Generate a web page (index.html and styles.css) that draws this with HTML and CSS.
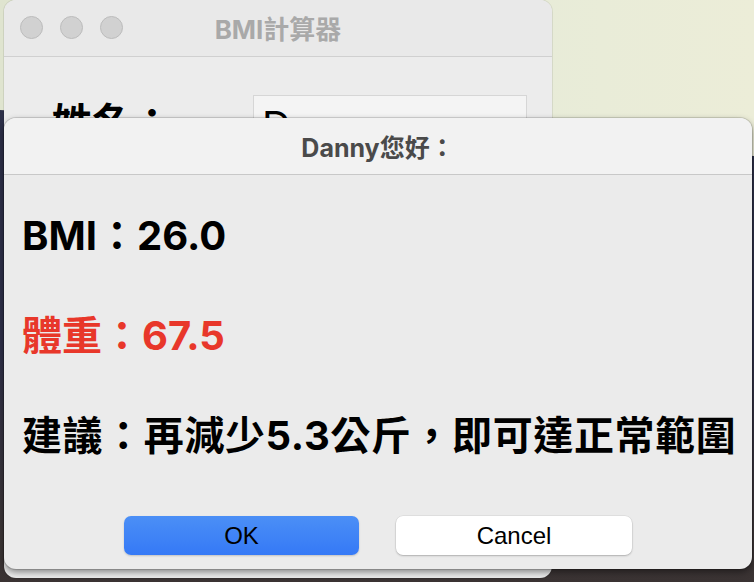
FILE: index.html
```html
<!DOCTYPE html>
<html lang="zh-Hant">
<head>
<meta charset="utf-8">
<title>BMI計算器</title>
<link rel="stylesheet" href="styles.css">
</head>
<body>
<div class="desktop">
  <div class="window back">
    <div class="titlebar">
      <div class="lights">
        <span class="light"></span>
        <span class="light"></span>
        <span class="light"></span>
      </div>
      <div class="wtitle">BMI計算器</div>
    </div>
    <div class="wbody">
      <div class="field-row">
        <span class="label">姓名：</span>
        <div class="textfield">D</div>
      </div>
    </div>
  </div>

  <div class="window dialog">
    <div class="dtitlebar">Danny您好：</div>
    <div class="dbody">
      <div class="lines">
        <div class="line">BMI：26.0</div>
        <div class="line red">體重：67.5</div>
        <div class="line wide">建議：再減少5.3公斤，即可達正常範圍</div>
      </div>
      <div class="buttons">
        <button class="btn primary">OK</button>
        <button class="btn">Cancel</button>
      </div>
    </div>
  </div>
</div>
</body>
</html>
```

FILE: styles.css
```css
* { box-sizing: border-box; }
html, body {
  margin: 0;
  padding: 0;
  width: 754px;
  height: 582px;
  overflow: hidden;
}
body {
  font-family: Inter, "Noto Sans CJK TC", sans-serif;
  text-spacing-trim: space-all;
}
.desktop {
  position: relative;
  width: 754px;
  height: 582px;
  background: linear-gradient(90deg, #dfe4cf 0%, #e6ebd8 60%, #ecedd8 100%);
  overflow: hidden;
}
.desktop::before {
  content: "";
  position: absolute;
  inset: 0;
  background: linear-gradient(180deg, #2c3048 0%, #2f3049 60%, #3d3637 92%, #3a3333 100%);
  clip-path: polygon(0 110px, 100% 156px, 100% 100%, 0 100%);
}
.window {
  position: absolute;
  border-radius: 12px;
  overflow: hidden;
}
.back {
  left: 4px;
  top: 0;
  width: 548px;
  height: 578px;
  background: #ececec;
  box-shadow: 0 0 0 1px rgba(0,0,0,0.08);
}
.titlebar {
  position: relative;
  height: 57px;
  background: #e9e9e9;
  border-bottom: 1px solid #d0d0d0;
  display: flex;
  align-items: center;
  justify-content: center;
}
.lights {
  position: absolute;
  left: 16px;
  top: 16px;
  display: flex;
  gap: 17px;
}
.light {
  width: 23px;
  height: 23px;
  border-radius: 50%;
  background: #d1d1d1;
  border: 1px solid #bcbcbc;
}
.wtitle {
  font-weight: bold;
  font-size: 26px;
  color: #a9a9a9;
  margin-top: -2px;
}
.wbody {
  padding: 38px 0 0 48px;
}
.field-row {
  display: flex;
  align-items: flex-start;
}
.label {
  font-weight: bold;
  font-size: 40px;
  color: #000;
  width: 201px;
  margin-top: 4px;
  line-height: 48px;
}
.textfield {
  width: 274px;
  height: 60px;
  background: #f4f4f4;
  border: 1px solid #d6d6d6;
  font-size: 40px;
  padding-left: 8px;
  padding-top: 6px;
  line-height: 48px;
  color: #000;
}

.dialog {
  left: 4px;
  top: 118px;
  width: 748px;
  height: 451px;
  background: #ebebeb;
  box-shadow: 0 3px 7px rgba(0,0,0,0.45), 0 0 0 1px rgba(0,0,0,0.12);
  display: flex;
  flex-direction: column;
}
.dtitlebar {
  height: 57px;
  flex: none;
  background: #f2f2f2;
  border-bottom: 1px solid #c8c8c8;
  display: flex;
  align-items: center;
  justify-content: center;
  font-weight: bold;
  font-size: 25px;
  color: #4a4a4a;
}
.dbody {
  flex: 1;
  display: flex;
  flex-direction: column;
}
.lines {
  padding: 11px 0 0 18px;
}
.line {
  height: 100px;
  line-height: 100px;
  font-weight: bold;
  font-size: 40px;
  color: #000;
  white-space: nowrap;
}
.wide { letter-spacing: 0.6px; }
.red { color: #e8372a; }
.buttons {
  margin-top: 30px;
  display: flex;
  justify-content: center;
  gap: 37px;
}
.btn {
  width: 236px;
  height: 39px;
  border: none;
  border-radius: 7px;
  background: #fff;
  font-family: "Liberation Sans", sans-serif;
  font-size: 24px;
  color: #000;
  padding: 0;
  box-shadow: 0 1px 2px rgba(0,0,0,0.22), 0 0 0 0.5px rgba(0,0,0,0.08);
}
.primary {
  width: 235px;
  background: linear-gradient(180deg, #4b8ff6 0%, #3579f6 100%);
  box-shadow: 0 1px 2px rgba(0,0,0,0.18);
}
```
